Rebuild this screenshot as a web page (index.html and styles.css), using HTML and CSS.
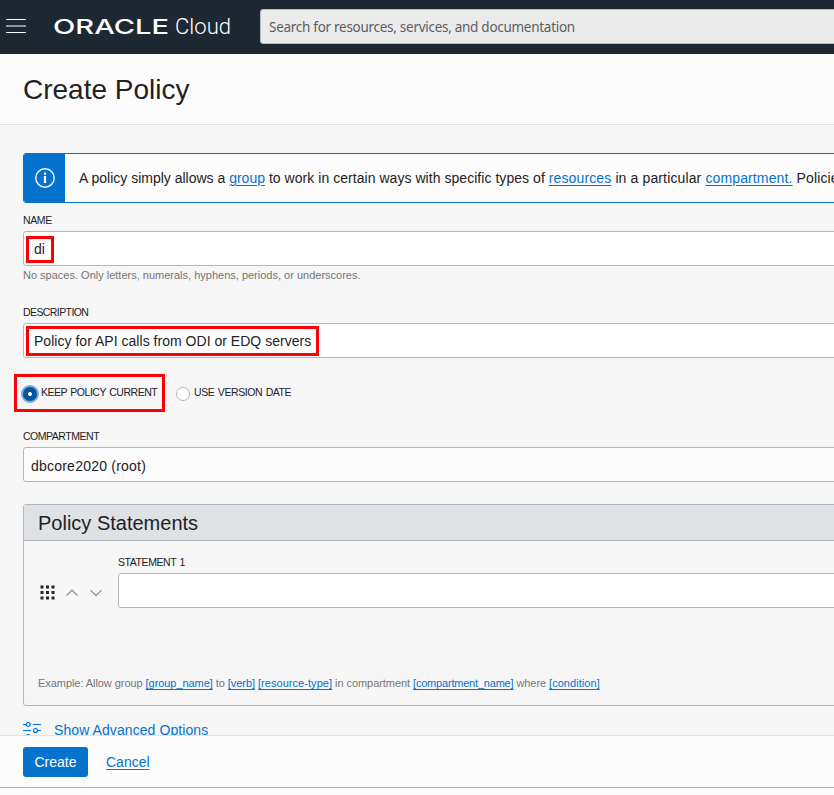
FILE: index.html
```html
<!DOCTYPE html>
<html lang="en">
<head>
<meta charset="utf-8">
<title>Create Policy</title>
<link rel="stylesheet" href="styles.css">
</head>
<body>
<header class="topbar">
  <button class="menu" aria-label="Menu"><span></span><span></span><span></span></button>
  <svg class="logo" width="178" height="30" viewBox="0 0 178 30" role="img">
    <text class="logo-oracle" x="-1" y="22" textLength="116" lengthAdjust="spacingAndGlyphs">ORACLE</text>
    <text class="logo-cloud" x="121" y="22" textLength="56" lengthAdjust="spacingAndGlyphs">Cloud</text>
  </svg>
  <div class="search">Search for resources, services, and documentation</div>
</header>
<div class="titlebar"><h1>Create Policy</h1></div>
<main class="content">
  <div class="notice">
    <div class="notice-icon">
      <svg width="20" height="20" viewBox="0 0 20 20" fill="none" stroke="#fff"><circle cx="10" cy="10" r="9.2" stroke-width="1.4"/><path d="M10 8V15" stroke-width="2.2"/><path d="M10 4.500V6.800" stroke-width="2.2"/></svg>
    </div>
    <p>A policy simply allows a <a>group</a> <span class="notice-mid">to work in certain ways with specific types of</span> <span class="notice-rest"><a>resources</a> in a particular <a>compartment.</a> Policies</span></p>
  </div>
  <div class="field name-field">
    <label class="label-name">NAME</label>
    <div class="input"><span class="mark mark-name">di</span></div>
    <p class="help">No spaces. Only letters, numerals, hyphens, periods, or underscores.</p>
  </div>
  <div class="field">
    <label class="label-desc">DESCRIPTION</label>
    <div class="input"><span class="mark mark-desc">Policy for API calls from ODI or EDQ servers</span></div>
  </div>
  <div class="radios">
    <div class="radio-marked"><span class="radio radio-on"></span><span class="radio-label">KEEP POLICY CURRENT</span></div>
    <div class="radio-option"><span class="radio"></span><span class="radio-label">USE VERSION DATE</span></div>
  </div>
  <div class="field">
    <label class="label-comp">COMPARTMENT</label>
    <div class="input select">dbcore2020 (root)</div>
  </div>
  <section class="panel">
    <h2>Policy Statements</h2>
    <div class="statement">
      <div class="tools">
        <svg width="15" height="15" viewBox="0 0 15 15" fill="#24222a"><path d="M.5.5h3v3h-3zM6 .5h3v3H6zM11.500 .5h3v3h-3zM.5 6h3v3h-3zM6 6h3v3H6zM11.500 6h3v3h-3zM.5 11.500h3v3h-3zM6 11.500h3v3H6zM11.500 11.500h3v3h-3z"/></svg>
        <svg class="chevron" width="12" height="8" viewBox="0 0 12 8"><path d="M.5 6.700 6 1.200l5.500 5.500"/></svg>
        <svg class="chevron" width="12" height="8" viewBox="0 0 12 8"><path d="M.5 1.200 6 6.700l5.500-5.500"/></svg>
      </div>
      <div class="field statement-field">
        <label class="label-stmt">STATEMENT 1</label>
        <div class="input"></div>
      </div>
    </div>
    <p class="example">Example: Allow group <a>[group_name]</a> to <a>[verb]</a> <a class="wide">[resource-type]</a> in compartment <a class="tight">[compartment_name]</a> where <a class="wide">[condition]</a></p>
  </section>
  <div class="advanced">
    <svg width="18" height="17" viewBox="0 0 18 17" fill="none" stroke="#0572ce" stroke-width="1.2"><path d="M0 2.500h3M7 2.500h1M10 2.500h8M0 8.500h8M15 8.500h3M0 14.500h3M8 14.500h10"/><circle cx="5.200" cy="2.500" r="2"/><circle cx="12.500" cy="8.500" r="2"/><circle cx="5.200" cy="14.500" r="2"/></svg>
    <span>Show Advanced Options</span>
  </div>
</main>
<footer class="actions">
  <button class="create">Create</button>
  <a class="cancel">Cancel</a>
</footer>
</body>
</html>
```
FILE: styles.css
```css
* { box-sizing: border-box; margin: 0; padding: 0; }
html, body { height: 795px; overflow: hidden; }
body {
  display: flex;
  flex-direction: column;
  width: 834px;
  background: #fcfcfc;
  color: #24211f;
  font: 14px/20px "Liberation Sans", Arial, sans-serif;
}
a { color: #0572ce; text-decoration: underline; text-underline-offset: 2px; }
button { border: 0; background: none; font: inherit; }

.topbar {
  display: flex;
  align-items: center;
  flex: 0 0 54px;
  padding-left: 6px;
  background: #1e2833;
}
.menu { display: flex; flex: none; flex-direction: column; justify-content: space-between; width: 20px; height: 14px; margin-top: -2px; }
.menu span { height: 1px; background: #fff; }
.menu span:nth-child(2) { height: 2px; background: #949599; }
.logo { flex: none; margin: 0 0 0 28px; overflow: visible; }
.logo text { fill: #fff; }
.logo .logo-oracle { font-family: Inter, sans-serif; font-size: 20.5px; font-weight: 500; }
.logo .logo-cloud { font-family: Roboto, sans-serif; font-size: 22px; font-weight: 300; }
.search {
  flex: 0 0 600px;
  height: 35px;
  margin: -1px 0 0 28px;
  padding-left: 8px;
  border: 1px solid #b7bbc3;
  border-radius: 3px;
  background: #ebebeb;
  color: #5d5c5f;
  font: 13.5px/34px "Noto Sans", sans-serif;
  letter-spacing: -.28px;
}
.titlebar { flex: 0 0 71px; padding: 16px 23px 0; border-bottom: 1px solid #e2e2e2; }
h1 { font-size: 28px; line-height: 40px; font-weight: 400; }

.content { flex: 1 1 0; overflow: hidden; padding: 28px 0 0 23px; background: #f6f6f6; }
.notice {
  display: flex;
  width: 1100px;
  height: 50px;
  border: 1px solid #0572ce;
  border-radius: 3px;
  background: #fcfcfc;
  overflow: hidden;
}
.notice-icon { display: flex; align-items: center; justify-content: center; width: 41px; padding-left: 1px; background: #0572ce; }
.notice p { padding-left: 14px; line-height: 48px; white-space: nowrap; }
.notice-mid { letter-spacing: .045px; }
.notice-rest { letter-spacing: .13px; }
.field { width: 1100px; }
.field label { display: block; height: 20px; font-size: 10.5px; line-height: 18px; }
.field .label-name { letter-spacing: -.4px; }
.field .label-desc { letter-spacing: -.58px; }
.field .label-comp { letter-spacing: -.47px; }
.field .label-stmt { letter-spacing: -.42px; word-spacing: 1px; }
.name-field { margin-top: 8px; height: 92px; }
.input {
  display: flex;
  align-items: center;
  height: 35px;
  border: 1px solid #b3b7bd;
  border-radius: 3px;
  background: #fff;
  white-space: nowrap;
}
.help { color: #757575; font-size: 11px; line-height: 18px; }
.mark { border: 3px solid #fb0007; margin-left: 2px; padding: 0 5px; }
.mark-name { width: 28px; height: 27px; margin-top: 1px; line-height: 20px; }
.mark-desc { height: 30px; line-height: 24px; letter-spacing: .025px; }

.radios { display: flex; align-items: flex-start; height: 39px; margin: 16px 0 14px -9px; }
.radio-marked { display: flex; align-items: center; width: 151px; height: 38px; padding-left: 4px; border: 3px solid #fb0007; }
.radio-option { display: flex; align-items: center; height: 38px; padding-left: 11px; }
.radio { flex: none; width: 14px; height: 14px; margin-top: 1px; border: 1px solid #b3b7bd; border-radius: 50%; background: #fff; }
.radio-on { width: 18px; height: 18px; border: 2px solid #79a8de; background: radial-gradient(circle, #fff 0 1.7px, #04549b 2.3px); }
.radio-label { font-size: 10.5px; line-height: 18px; margin: -3px 0 0 4px; letter-spacing: -.42px; word-spacing: 1px; white-space: nowrap; }
.radio-marked .radio-label { margin-left: 2px; letter-spacing: -.48px; }
.select { padding: 2px 0 0 7px; background: #fcfcfc; letter-spacing: .22px; }

.panel { width: 1100px; height: 202px; margin-top: 22px; border: 1px solid #b3b7bd; border-radius: 3px; }
h2 { height: 36px; padding-left: 14px; border-bottom: 1px solid #b3b7bd; background: #dee2e5; font-size: 20px; line-height: 37px; font-weight: 400; }
.statement { display: flex; height: 132px; padding-top: 12px; }
.tools { display: flex; flex: none; align-items: center; gap: 12px; width: 94px; height: 20px; margin-top: 29px; padding-left: 16px; }
.tools svg { flex: none; }
.tools .chevron { margin: 2px 0 0; fill: none; stroke: #8b8b8d; stroke-width: 1.2; }
.tools svg:nth-child(2) { margin-left: -1px; }
.example { padding-left: 14px; color: #757575; font-size: 11px; line-height: 20px; letter-spacing: -.06px; }
.example .tight { letter-spacing: -.2px; }
.example .wide { letter-spacing: .05px; }
.advanced { display: flex; align-items: center; gap: 13px; height: 20px; margin-top: 14px; color: #0572ce; letter-spacing: .08px; }

.actions { display: flex; align-items: center; flex: 0 0 53px; gap: 18px; padding-left: 23px; margin-bottom: 7px; border-top: 1px solid #e2e2e2; border-bottom: 1px solid #b3b7bd; background: #fcfcfc; }
.create { width: 65px; height: 30px; border-radius: 3px; background: #0572ce; color: #fff; }
```
